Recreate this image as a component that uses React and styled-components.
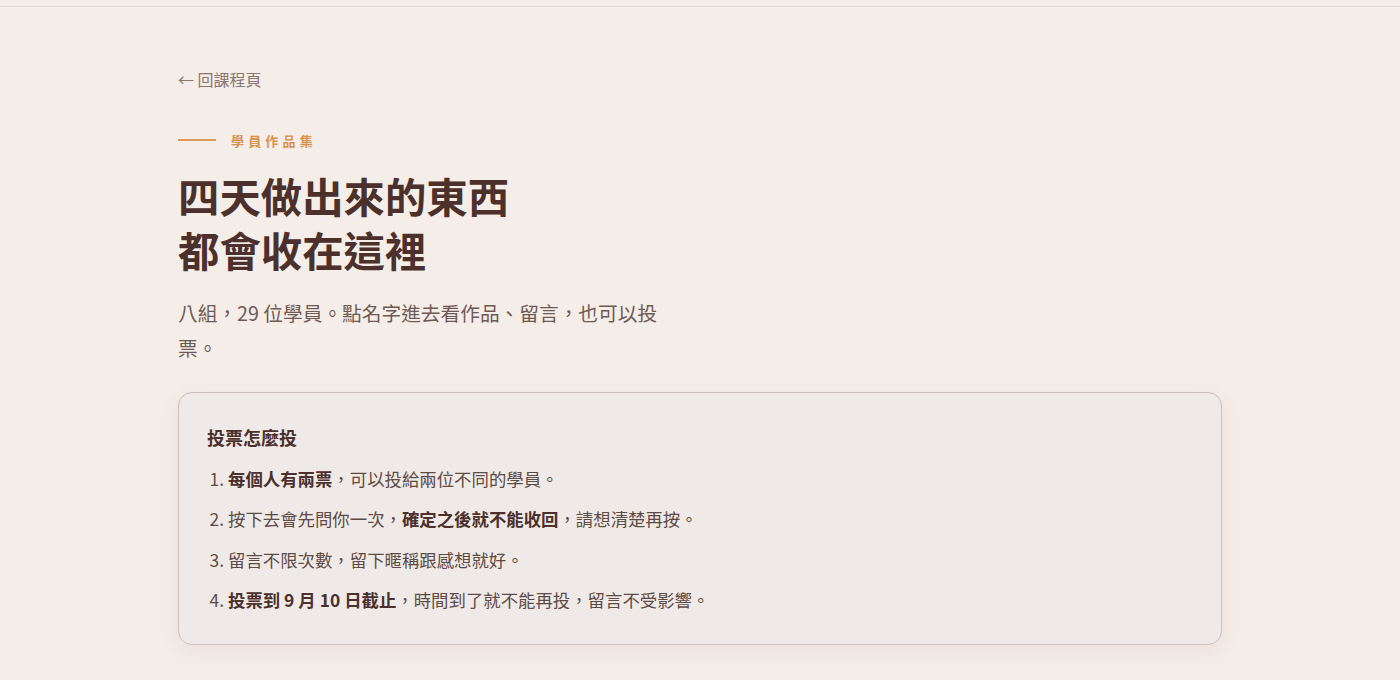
import React from "react";
import styled, { createGlobalStyle } from "styled-components";

const GlobalStyle = createGlobalStyle`
  html, body {
    margin: 0;
    padding: 0;
    background: #f5ede8;
  }
  body {
    font-family: "Noto Sans CJK TC", "Noto Sans", sans-serif;
    color: #4b302b;
    text-spacing-trim: space-all;
    -webkit-font-smoothing: antialiased;
  }
`;

const TopBar = styled.header`
  height: 6px;
  border-bottom: 1px solid #e3d9d4;
`;

const Main = styled.main`
  max-width: 1044px;
  margin: 0 auto;
  padding-top: 59px;
  padding-bottom: 40px;
`;

const BackLink = styled.a`
  display: inline-block;
  font-size: 16px;
  line-height: 26px;
  color: #8b7772;
  text-decoration: none;
  cursor: pointer;
`;

const Eyebrow = styled.div`
  margin-top: 38px;
  display: flex;
  align-items: center;
  gap: 15px;
  height: 20px;
`;

const EyebrowRule = styled.span`
  display: block;
  width: 38px;
  height: 2px;
  background: #dd9a58;
`;

const EyebrowText = styled.span`
  font-size: 13px;
  font-weight: 700;
  letter-spacing: 0.32em;
  color: #d8924f;
`;

const Title = styled.h1`
  margin: 18px 0 0;
  font-size: 41.4px;
  line-height: 54px;
  font-weight: 700;
  color: #4b302b;
`;

const Lead = styled.p`
  margin: 19px 0 0;
  max-width: 490px;
  font-size: 19.7px;
  line-height: 35px;
  color: #6e5a55;
`;

const Card = styled.section`
  margin-top: 27px;
  background: #efeae7;
  border: 1px solid #cdbfbb;
  border-radius: 14px;
  padding: 31px 28px 30px;
  box-shadow: 0 6px 22px rgba(120, 80, 60, 0.08);
`;

const CardTitle = styled.h2`
  margin: 0;
  font-size: 18px;
  line-height: 26px;
  font-weight: 700;
  color: #4b302b;
`;

const Steps = styled.ol`
  margin: 15px 0 0;
  padding-left: 21px;
`;

const Step = styled.li`
  font-size: 17.4px;
  line-height: 28px;
  color: #5e4a45;
  & + & {
    margin-top: 12.3px;
  }
  &::marker {
    color: #5e4a45;
  }
`;

const Strong = styled.strong`
  font-weight: 700;
  color: #4b302b;
`;

export default function App() {
  return (
    <>
      <GlobalStyle />
      <TopBar />
      <Main>
        <BackLink>← 回課程頁</BackLink>
        <Eyebrow>
          <EyebrowRule />
          <EyebrowText>學員作品集</EyebrowText>
        </Eyebrow>
        <Title>
          四天做出來的東西
          <br />
          都會收在這裡
        </Title>
        <Lead>八組，29 位學員。點名字進去看作品、留言，也可以投票。</Lead>
        <Card>
          <CardTitle>投票怎麼投</CardTitle>
          <Steps>
            <Step>
              <Strong>每個人有兩票</Strong>，可以投給兩位不同的學員。
            </Step>
            <Step>
              按下去會先問你一次，<Strong>確定之後就不能收回</Strong>，請想清楚再按。
            </Step>
            <Step>留言不限次數，留下暱稱跟感想就好。</Step>
            <Step>
              <Strong>投票到 9 月 10 日截止</Strong>，時間到了就不能再投，留言不受影響。
            </Step>
          </Steps>
        </Card>
      </Main>
    </>
  );
}
